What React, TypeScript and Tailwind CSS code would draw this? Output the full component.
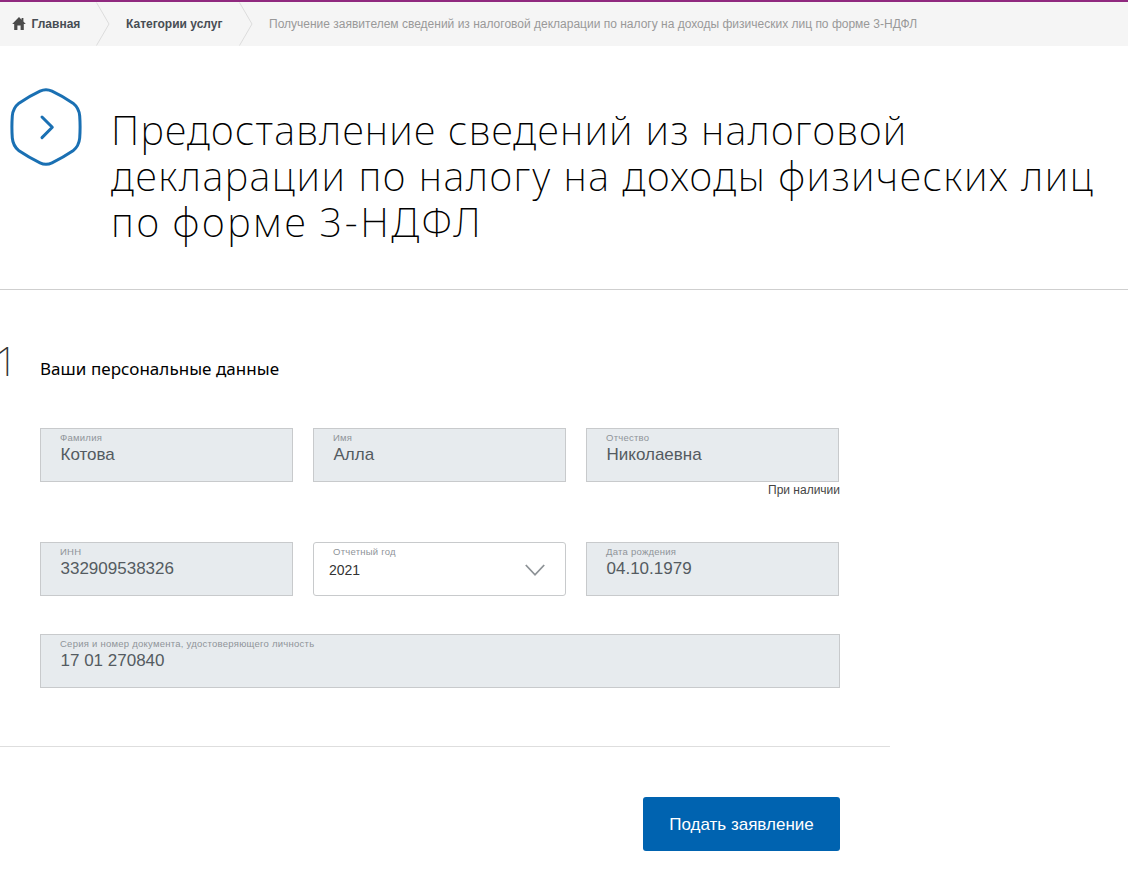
import React from 'react';
import clsx from 'clsx';

const titleLines = [
  { text: 'Предоставление сведений из налоговой', className: 'tracking-[1.22px]' },
  { text: 'декларации по налогу на доходы физических лиц', className: 'tracking-[1.5px]' },
  { text: 'по форме 3-НДФЛ', className: 'tracking-[2.6px] [word-spacing:-2px]' },
];

const HomeIcon = () => (
  <svg className="mb-0.5" width="14" height="13" viewBox="0 0 14 13" fill="#4a4a4a">
    <path d="M7 0 L0.2 7 H2.2 V13 H5.4 V8.5 H8.6 V13 H11.8 V7 H13.8 L11.4 4.5 V1 H9.6 V2.7 Z" />
  </svg>
);

const Separator = () => (
  <svg width="14" height="44" viewBox="0 0 14 44" fill="none" stroke="#dcdcdc">
    <path d="M0.5 0.5 L13 22 L0.5 43.5" />
  </svg>
);

const Breadcrumbs = () => (
  <nav className="flex h-[46px] items-center border-t-2 border-[#90297f] bg-[#f5f5f5] pl-3 text-[12px] leading-[16px]">
    <a href="#" className="flex w-[84px] items-center gap-[5.5px] font-bold text-[#474d54]">
      <HomeIcon />
      <span>Главная</span>
    </a>
    <Separator />
    <a href="#" className="ml-4 w-[113px] font-bold text-[#474d54]">
      Категории услуг
    </a>
    <Separator />
    <span className="ml-4 whitespace-nowrap text-[#999]">
      Получение заявителем сведений из налоговой декларации по налогу на доходы физических лиц по форме 3-НДФЛ
    </span>
  </nav>
);

const HexIcon = () => (
  <svg width="72" height="78" viewBox="0 0 72 78" fill="none" stroke="#1a70b3" strokeLinecap="round" strokeLinejoin="round">
    <path
      strokeWidth="3"
      d="M30 3.2 Q36 0.4 42 3.2 Q53 8.4 63 15.2 Q69 20 69.7 28 Q70.5 39 69.7 50 Q69 58 63 62.8 Q53 69.6 42 74.8 Q36 77.6 30 74.8 Q19 69.6 9 62.8 Q3 58 2.3 50 Q1.5 39 2.3 28 Q3 20 9 15.2 Q19 8.4 30 3.2 Z"
    />
    <path strokeWidth="3" d="M32 29 L42.3 39.3 L32 49.6" />
  </svg>
);

type FieldProps = {
  label: string;
  value: string;
  wide?: boolean;
};

const Field = ({ label, value, wide }: FieldProps) => (
  <div
    className={clsx(
      'flex h-[54px] flex-col border border-[#c8cacc] bg-[#e7ebee] pl-[19px]',
      wide ? 'w-[800px]' : 'w-[253px]',
    )}
  >
    <span className="mt-[3px] text-[9.5px] leading-[12px] tracking-[0.25px] text-[#8f9499]">{label}</span>
    <span className="mt-px pl-[0.5px] text-[17px] leading-[20px] text-[#545b61]">{value}</span>
  </div>
);

const YearSelect = () => (
  <div className="flex h-[54px] w-[253px] rounded-[3px] border border-[#c8cacc] bg-white">
    <div className="flex flex-1 flex-col">
      <span className="mt-[3px] pl-[19px] text-[9.5px] leading-[12px] tracking-[0.25px] text-[#8f9499]">Отчетный год</span>
      <span className="mt-0.5 pl-[15px] text-[14px] leading-[20px] text-[#333]">2021</span>
    </div>
    <svg className="mt-[21px] mr-5" width="20" height="13" viewBox="0 0 20 13" fill="none" stroke="#8d9296" strokeWidth="1.8">
      <path d="M0.8 1 L10 10.8 L19.2 1" />
    </svg>
  </div>
);

const App = () => {
  return (
    <div className="h-[888px] w-[1128px] overflow-hidden bg-white font-['Liberation_Sans',Arial,sans-serif]">
      <Breadcrumbs />

      <header className="flex h-[244px] border-b border-[#cfcfcf] pt-[41.5px] pl-[9.5px]">
        <HexIcon />
        <h1 className="mt-[19.5px] ml-[29.5px] font-['Noto_Sans',sans-serif] text-[40px] leading-[46px] font-extralight text-black">
          {titleLines.map((line) => (
            <span key={line.text} className={clsx('block whitespace-nowrap', line.className)}>
              {line.text}
            </span>
          ))}
        </h1>
      </header>

      {/* Personal data */}
      <section className="h-[457px] w-[890px] border-b border-[#dedede] pt-[48px]">
        <div className="flex h-[90px] items-start">
          <span className="-ml-[5px] w-[45px] font-['Noto_Sans',sans-serif] text-[40px] leading-[46px] font-extralight text-[#333]">
            1
          </span>
          <h2 className="mt-[19px] font-['Noto_Sans',sans-serif] text-[17px] leading-[24px] tracking-[0.04px] whitespace-nowrap text-black">
            Ваши персональные данные
          </h2>
        </div>

        <div className="flex flex-col pl-10">
          <div className="flex h-[114px] gap-5">
            <Field label="Фамилия" value="Котова" />
            <Field label="Имя" value="Алла" />
            <div className="w-[254px]">
              <Field label="Отчество" value="Николаевна" />
              <p className="text-right text-[12px] leading-[16px] text-[#444]">При наличии</p>
            </div>
          </div>
          <div className="flex h-[92px] gap-5">
            <Field label="ИНН" value="332909538326" />
            <YearSelect />
            <Field label="Дата рождения" value="04.10.1979" />
          </div>
          <Field label="Серия и номер документа, удостоверяющего личность" value="17 01 270840" wide />
        </div>
      </section>

      <div className="flex w-[840px] justify-end pt-[50px]">
        <button className="h-[54px] w-[197px] rounded-[3px] bg-[#0063b0] pt-0.5 text-[17px] text-white">
          Подать заявление
        </button>
      </div>
    </div>
  );
};

export default App;
